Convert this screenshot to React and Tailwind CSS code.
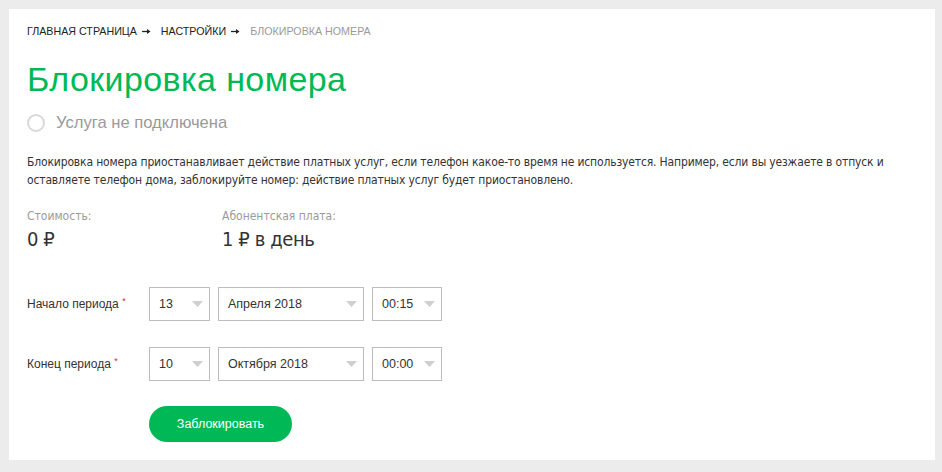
import React from "react";

const Arrow = () => (
  <svg width="11" height="6" viewBox="0 0 11 6" className="shrink-0">
    <path d="M0 0 L11 0 L5.5 6 Z" fill="#cfcfcf" />
  </svg>
);

const Crumb = () => (
  <svg width="9" height="7" viewBox="0 0 9 7" className="ml-[5px] mr-[10px] shrink-0">
    <path d="M0 3.5 H7" stroke="#222" strokeWidth="1.3" />
    <path d="M5 1 L8.5 3.5 L5 6 Z" fill="#222" />
  </svg>
);

const Select = ({ value, w }) => (
  <div
    className={`flex items-center justify-between h-[34px] border border-[#bdbdbd] pl-[9px] pr-[6px] text-[12.5px] text-[#333] ${w}`}
  >
    <span>{value}</span>
    <Arrow />
  </div>
);

export default function App() {
  const sans = { fontFamily: '"Liberation Sans", Arial, sans-serif' };
  const narrow = {
    fontFamily: '"DejaVu Sans Condensed", "Liberation Sans Narrow", "Liberation Sans", sans-serif',
  };
  return (
    <div className="w-[942px] h-[472px] bg-[#ececec] pt-[9px] pl-[9px] pr-[7px] pb-[12px]" style={sans}>
      <div className="bg-white h-full pl-[18px] pt-[16px]">
        <div className="flex items-center text-[10.7px] uppercase h-[13px] text-[#222]">
          <span>Главная страница</span>
          <Crumb />
          <span>Настройки</span>
          <Crumb />
          <span className="text-[#9a9a9a]">Блокировка номера</span>
        </div>
        <h1 className="mt-[22px] text-[34px] leading-[38px] tracking-[0.4px] text-[#00b956]">Блокировка номера</h1>
        <div className="mt-[15px] flex items-center h-[20px]">
          <span className="w-[18px] h-[18px] rounded-full border-2 border-[#d9d9d9] mr-[11px]" />
          <span className="text-[16.6px] text-[#9a9a9a]">Услуга не подключена</span>
        </div>
        <p className="mt-[20px] text-[12px] leading-[18px] tracking-[-0.15px] text-[#333] w-[880px]" style={narrow}>
          Блокировка номера приостанавливает действие платных услуг, если телефон какое-то время не используется. Например, если вы уезжаете в отпуск и оставляете телефон дома, заблокируйте номер: действие платных услуг будет приостановлено.
        </p>
        <div className="mt-[19px] flex" style={narrow}>
          <div className="w-[195px]">
            <div className="text-[12px] leading-[16px] text-[#9a9a9a]">Стоимость:</div>
            <div className="mt-[3px] text-[20px] leading-[24px] tracking-[-0.4px] text-[#333]">0 ₽</div>
          </div>
          <div>
            <div className="text-[12px] leading-[16px] text-[#9a9a9a]">Абонентская плата:</div>
            <div className="mt-[3px] text-[20px] leading-[24px] tracking-[-0.4px] text-[#333]">1 ₽ в день</div>
          </div>
        </div>
        <div className="mt-[36px] flex items-center">
          <div className="w-[122px] text-[12px] text-[#333]">
            Начало периода <span className="text-[#e0283c] text-[9px] align-top">*</span>
          </div>
          <div className="flex gap-[8px]">
            <Select value="13" w="w-[61px]" />
            <Select value="Апреля 2018" w="w-[146px]" />
            <Select value="00:15" w="w-[70px]" />
          </div>
        </div>
        <div className="mt-[26px] flex items-center">
          <div className="w-[122px] text-[12px] text-[#333]">
            Конец периода <span className="text-[#e0283c] text-[9px] align-top">*</span>
          </div>
          <div className="flex gap-[8px]">
            <Select value="10" w="w-[61px]" />
            <Select value="Октября 2018" w="w-[146px]" />
            <Select value="00:00" w="w-[70px]" />
          </div>
        </div>
        <div className="mt-[25px] pl-[122px]">
          <button className="w-[143px] h-[36px] rounded-full bg-[#00b956] text-white text-[12.5px]">
            Заблокировать
          </button>
        </div>
      </div>
    </div>
  );
}
